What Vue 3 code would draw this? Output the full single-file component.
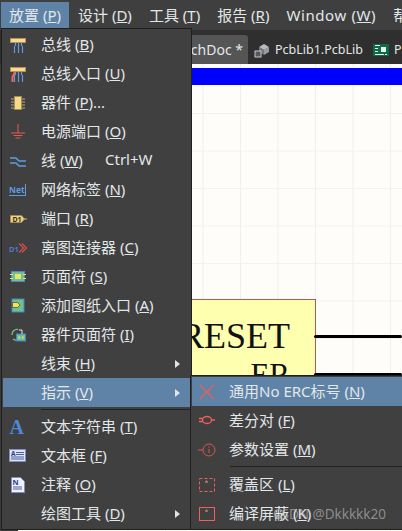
<script setup>
const topMenus = [
  { label: '放置 ', key: 'P', active: true },
  { label: '设计 ', key: 'D' },
  { label: '工具 ', key: 'T' },
  { label: '报告 ', key: 'R' },
  { label: 'Window ', key: 'W', wide: true },
]
const mainItems = [
  { icon: 'bus', label: '总线 ', key: 'B' },
  { icon: 'busentry', label: '总线入口 ', key: 'U' },
  { icon: 'part', label: '器件 ', key: 'P', tail: '...' },
  { icon: 'power', label: '电源端口 ', key: 'O' },
  { icon: 'wire', label: '线 ', key: 'W', shortcut: 'Ctrl+W' },
  { icon: 'net', label: '网络标签 ', key: 'N' },
  { icon: 'port', label: '端口 ', key: 'R' },
  { icon: 'offsheet', label: '离图连接器 ', key: 'C' },
  { icon: 'sheet', label: '页面符 ', key: 'S' },
  { icon: 'entry', label: '添加图纸入口 ', key: 'A' },
  { icon: 'devsheet', label: '器件页面符 ', key: 'I' },
  { label: '线束 ', key: 'H', arrow: true },
  { label: '指示 ', key: 'V', arrow: true, active: true, sep: true },
  { icon: 'text', label: '文本字符串 ', key: 'T' },
  { icon: 'frame', label: '文本框 ', key: 'F' },
  { icon: 'note', label: '注释 ', key: 'O' },
  { label: '绘图工具 ', key: 'D', arrow: true },
]
const subItems = [
  { icon: 'x', label: '通用No ERC标号 ', key: 'N', active: true },
  { icon: 'diff', label: '差分对 ', key: 'F' },
  { icon: 'param', label: '参数设置 ', key: 'M', sep: true },
  { icon: 'cover', label: '覆盖区 ', key: 'L' },
  { icon: 'mask', label: '编译屏蔽 ', key: 'K' },
]
</script>

<template>
  <div class="screen">
    <nav class="menubar">
      <span v-for="m in topMenus" :key="m.label" class="top-item" :class="{ on: m.active, wide: m.wide }">{{ m.label }}(<u>{{ m.key }}</u>)</span>
      <span class="top-item">帮</span>
    </nav>
    <div class="tabbar">
      <div class="tab current">SchDoc *</div>
      <div class="tab">
        <svg class="tab-icon" viewBox="0 0 16 16">
          <path d="M5 5l5-3 5 3-5 3z" fill="#b8bcc2" />
          <path d="M5 5v5l5 3V8z" fill="#74787e" />
          <path d="M15 5v5l-5 3V8z" fill="#989ca2" />
          <rect x="1" y="9" width="6" height="6" fill="#54585c" stroke="#c4c8cc" />
        </svg>
        PcbLib1.PcbLib
      </div>
      <div class="tab">
        <svg class="tab-icon" viewBox="0 0 16 16">
          <rect width="16" height="12" y="2" fill="#0d6b4a" />
          <path d="M2 3h5v1H2zM2 6h3v1H2zM2 9h3v1H2zM2 12h9v1H2zM12 12h2v1h-2z" fill="#e6f2ea" />
          <rect x="8" y="5" width="5" height="5" fill="#e6f2ea" />
        </svg>
        P
      </div>
    </div>
    <main class="canvas">
      <div class="blue"></div>
      <div class="part-box">
        <span class="reset">RESET</span>
        <span class="er">ER</span>
      </div>
      <div class="pin pin-a"></div>
      <div class="pin pin-b"></div>
    </main>

    <div class="menu main-menu">
      <template v-for="item in mainItems" :key="item.label">
        <div class="row" :class="{ on: item.active }">
          <span class="ico">
            <svg v-if="item.icon" class="ico-svg" viewBox="0 0 18 18" width="18" height="18" fill="none">
              <template v-if="item.icon === 'bus' || item.icon === 'busentry'">
                <rect x="1.5" y="2.5" width="15" height="4" fill="#f6dc90" stroke="#b8915a" />
                <path d="M6.5 7v3M9.5 7v3M12.5 7v3" stroke="#5f9ae0" stroke-width="1.2" />
                <path d="M5.5 10v7M9.5 10v7M13.5 10v7" stroke="#5f9ae0" stroke-width="1.2" />
                <path v-if="item.icon === 'busentry'" d="M6 7l-2.5 5v5" stroke="#f0675c" stroke-width="2" />
              </template>
              <template v-else-if="item.icon === 'part'">
                <rect x="5.5" y="2.5" width="7" height="13" fill="#f4d98a" stroke="#a98a4e" />
                <path d="M2 5h3M2 8h3M2 11h3M2 14h3M13 5h3M13 8h3M13 11h3M13 14h3" stroke="#8c8866" stroke-width="1.4" />
              </template>
              <template v-else-if="item.icon === 'power'">
                <path d="M9 1v9M2 10h14M4.500 12.500h9M6.500 15h5" stroke="#e05a52" />
              </template>
              <template v-else-if="item.icon === 'wire'">
                <path d="M1 6h6l3 3h7M1 11h6l3 3h7" stroke="#5f9ae0" stroke-width="1.6" />
              </template>
              <template v-else-if="item.icon === 'net'">
                <text x="0" y="12" class="net-label">Net</text>
                <path d="M0 14.500h16M16.500 3v12" stroke="#5f9ae0" />
              </template>
              <template v-else-if="item.icon === 'port'">
                <path d="M1.500 5.500h11l3 3.500-3 3.500h-11z" fill="#f0d47e" stroke="#a58a50" />
                <path d="M15 9h3" stroke="#c9b070" />
                <text x="3.500" y="11.500" class="port-label">D1</text>
              </template>
              <template v-else-if="item.icon === 'offsheet'">
                <text x="0" y="13" class="off-label">D1</text>
                <path d="M10 4.500l4.500 4.500-4.500 4.500M13 4.500l4.500 4.500-4.500 4.500" stroke="#d84f4a" stroke-width="1.2" />
              </template>
              <template v-else-if="item.icon === 'sheet'">
                <rect x="2.500" y="3.500" width="13" height="10" fill="#6cc28a" stroke="#5a7fd0" />
                <rect x="6" y="6" width="6" height="5" fill="#f0e070" />
                <path d="M1 6.500h3M1 10.500h3M14 6.500h3M14 10.500h3" stroke="#f0e070" />
              </template>
              <template v-else-if="item.icon === 'entry'">
                <rect x="3" y="2" width="12" height="13" fill="#6cc28a" stroke="#4f7fd0" />
                <path d="M3.500 5.500h5l2.500 2.500-2.500 2.500h-5z" fill="#f6e24a" stroke="#333" stroke-width=".6" />
              </template>
              <template v-else-if="item.icon === 'devsheet'">
                <path d="M9 3.500A5 5 0 0 0 3 9M4 13a5 5 0 0 0 4 1" stroke="#6cc28a" stroke-width="1.4" />
                <rect x="7.500" y="8" width="9" height="7" fill="#6cc28a" stroke="#4f7fd0" />
                <path d="M10 4h3v4" stroke="#e6e6e6" />
                <path d="M9.500 11.500h1.500M13 11.500h1.500" stroke="#f0e070" stroke-width="2" />
              </template>
              <template v-else-if="item.icon === 'text'">
                <text x="0.500" y="15.500" class="big-a">A</text>
              </template>
              <template v-else-if="item.icon === 'frame'">
                <rect x="0.500" y="2.500" width="16" height="12" fill="#dfe4f5" stroke="#7f8ec0" />
                <text x="2" y="9" class="frame-a">A</text>
                <path d="M7 5.500h8M7 7.500h8M2 10h13M2 12h13" stroke="#4c5c9c" />
              </template>
              <template v-else-if="item.icon === 'note'">
                <path d="M2.500 1.500h9l4 4v11h-13z" fill="#eef1fb" stroke="#7f8ec0" />
                <text x="3.500" y="9" class="note-n">N</text>
                <path d="M4 11h9M4 13h9" stroke="#4c5c9c" />
              </template>
            </svg>
          </span>
          <span class="label">{{ item.label }}(<u>{{ item.key }}</u>){{ item.tail }}</span>
          <span v-if="item.shortcut" class="shortcut">{{ item.shortcut }}</span>
          <span v-if="item.arrow" class="arrow"></span>
        </div>
        <div v-if="item.sep" class="sep"></div>
      </template>
    </div>

    <div class="menu sub-menu">
      <template v-for="item in subItems" :key="item.label">
        <div class="row" :class="{ on: item.active }">
          <span class="ico sub-ico">
            <svg viewBox="0 0 18 18" width="18" height="18" fill="none">
              <path v-if="item.icon === 'x'" d="M2 2l14 14M16 2L2 16" stroke="#e8605a" stroke-width="1.2" />
              <template v-else-if="item.icon === 'diff'">
                <ellipse cx="9" cy="8" rx="4.500" ry="3.500" stroke="#f0605c" stroke-width="1.300" />
                <path d="M1 6.500h4M1 9.500h4M13 8h4" stroke="#f0605c" stroke-width="1.300" />
              </template>
              <template v-else-if="item.icon === 'param'">
                <circle cx="11" cy="9" r="6" stroke="#d8564f" />
                <path d="M0 9h5M11 8v4M11 5.500v1.200" stroke="#d8564f" />
              </template>
              <template v-else-if="item.icon === 'cover'">
                <rect x="1.500" y="2.500" width="15" height="13" stroke="#ef5f5b" stroke-dasharray="3 2" />
                <path d="M7 6h3M8 5h1" stroke="#ef8f8b" />
              </template>
              <template v-else-if="item.icon === 'mask'">
                <rect x="1.500" y="2.500" width="15" height="13" stroke="#ef5f5b" />
                <path d="M7 6h3M8 5h1" stroke="#ef8f8b" />
              </template>
            </svg>
          </span>
          <span class="label">{{ item.label }}(<u>{{ item.key }}</u>)</span>
        </div>
        <div v-if="item.sep" class="sep"></div>
      </template>
    </div>

    <div class="mark">CSDN @Dkkkkk20</div>
  </div>
</template>

<style>
body { margin: 0; background: #3f3f3f; }
</style>

<style scoped>
.screen {
  position: relative;
  width: 402px;
  height: 531px;
  overflow: hidden;
  display: flex;
  flex-direction: column;
  background: #3a3a3a;
  font-family: "Noto Sans", "Noto Sans CJK SC", sans-serif;
  font-size: 15px;
  color: #e2e7ea;
}
.menubar {
  height: 30px;
  flex: none;
  display: flex;
  align-items: flex-start;
  padding-left: 1px;
  background: #3f3f3f;
  box-sizing: border-box;
  white-space: nowrap;
}
.top-item {
  height: 26px;
  line-height: 26px;
  margin-top: 2px;
  padding: 0 8px;
  margin-right: 1px;
  flex: none;
}
.top-item.on { background: #5f83a6; }
.top-item.wide { letter-spacing: 0.6px; }
.tabbar {
  height: 34px;
  flex: none;
  display: flex;
  align-items: flex-end;
  padding-left: 120px;
  background: #2f2f2f;
  box-sizing: border-box;
  white-space: nowrap;
  font-size: 12.5px;
}
.tab {
  height: 29px;
  line-height: 28px;
  flex: none;
  display: flex;
  align-items: center;
  gap: 5px;
  padding: 0 4px 0 6px;
  box-sizing: border-box;
}
.tab.current {
  width: 128px;
  justify-content: flex-end;
  background: #555555;
  border-radius: 3px 3px 0 0;
  padding-right: 5px;
  font-size: 14px;
}
.tab-icon { width: 16px; height: 16px; flex: none; }
.canvas {
  position: relative;
  flex: 1;
  margin-left: 18px;
  background-color: #fffdf9;
  background-image:
    linear-gradient(90deg, #f1efeb 1px, transparent 1px),
    linear-gradient(#f4f2ee 1px, transparent 1px);
  background-size: 37.5px 37.5px;
  background-position: -3px 11.5px;
}
.blue {
  height: 18px;
  margin-top: 3px;
  background: #0000ff;
  border-top: 1px solid #fff;
  box-sizing: border-box;
}
.part-box {
  position: absolute;
  left: 102px;
  top: 235px;
  width: 196px;
  height: 120px;
  box-sizing: border-box;
  background: #ffffb0;
  border: 1px solid #b9584f;
  color: #111;
  font-family: "Liberation Serif", serif;
  line-height: 38px;
}
.reset { position: absolute; right: 25px; top: 17px; font-size: 36px; }
.er { position: absolute; right: 25px; top: 56px; font-size: 31px; }
.pin { position: absolute; left: 296px; right: 0; height: 3px; border-radius: 2px; background: #000; }
.pin-a { top: 271px; }
.pin-b { top: 309px; }
.menu {
  position: absolute;
  background: #404040;
  border: 1px solid #1f1f1f;
  box-sizing: border-box;
  padding: 1px 1px 0;
}
.main-menu { left: 1px; top: 28px; width: 191px; height: 502px; }
.sub-menu { left: 190px; top: 375px; width: 214px; height: 155px; }
.row {
  height: 29px;
  display: flex;
  align-items: center;
  white-space: nowrap;
  position: relative;
}
.row.on { background: #5f83a6; }
.label { position: relative; top: -1px; }
.ico {
  width: 38px;
  flex: none;
  display: flex;
  padding-left: 6px;
  box-sizing: border-box;
}
.ico-svg { overflow: visible; }
.sub-ico { padding-left: 6px; }
.sep { height: 1px; background: #222; margin: 2px 0 2px 38px; }
.sub-menu .sep { margin-bottom: 3px; }
.sub-menu .ico { width: 37px; }
.shortcut { position: absolute; left: 102px; top: 3px; }
.arrow {
  position: absolute;
  left: 172px;
  width: 0;
  height: 0;
  border-left: 5px solid #e4e4e4;
  border-top: 4px solid transparent;
  border-bottom: 4px solid transparent;
}
.net-label { font: 700 8.500px "Noto Sans", sans-serif; fill: #5f9ae0; }
.port-label { font: 700 7px "Noto Sans", sans-serif; fill: #33302a; }
.off-label { font: 700 7.500px "Noto Sans", sans-serif; fill: #4f78d0; }
.big-a { font: 700 20px "Liberation Serif", serif; fill: #4f86d8; }
.frame-a { font: 700 6.500px "Noto Sans", sans-serif; fill: #333f7c; }
.note-n { font: 700 7.500px "Noto Sans", sans-serif; fill: #2a3f9c; }
.mark {
  position: absolute;
  right: 16px;
  top: 505px;
  font-size: 13.500px;
  line-height: 18px;
  color: rgba(190, 190, 190, 0.62);
  white-space: nowrap;
}
</style>
